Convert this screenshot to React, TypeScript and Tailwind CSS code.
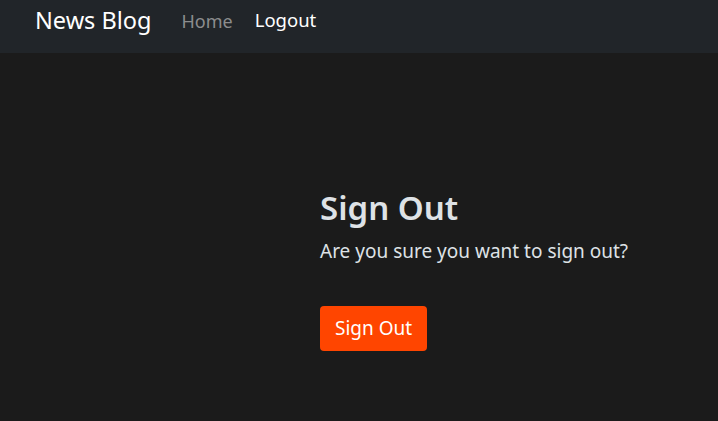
export default function App() {
  return (
    <div className="min-h-screen bg-[#1b1b1b] font-['Noto_Sans',sans-serif]">
      <nav className="h-[53px] bg-[#212529] flex items-center pl-[35px]">
        <span className="text-[23.5px] text-white leading-none mr-[30px] -mt-[12px]">News Blog</span>
        <span className="text-[18px] text-[#8c8d8e] leading-none mr-[22px] -mt-[12px]">Home</span>
        <span className="text-[18.5px] text-white leading-none -mt-[12px]">Logout</span>
      </nav>
      <main className="pl-[320px] pt-[134px]">
        <h2 className="text-[33px] font-semibold text-[#dee2e6] leading-tight">Sign Out</h2>
        <p className="text-[19px] text-[#dee2e6] mt-[9px]">Are you sure you want to sign out?</p>
        <button className="mt-[40px] h-[45px] px-[15px] rounded-[4px] bg-[#ff4500] text-white text-[19px]">
          Sign Out
        </button>
      </main>
    </div>
  );
}
